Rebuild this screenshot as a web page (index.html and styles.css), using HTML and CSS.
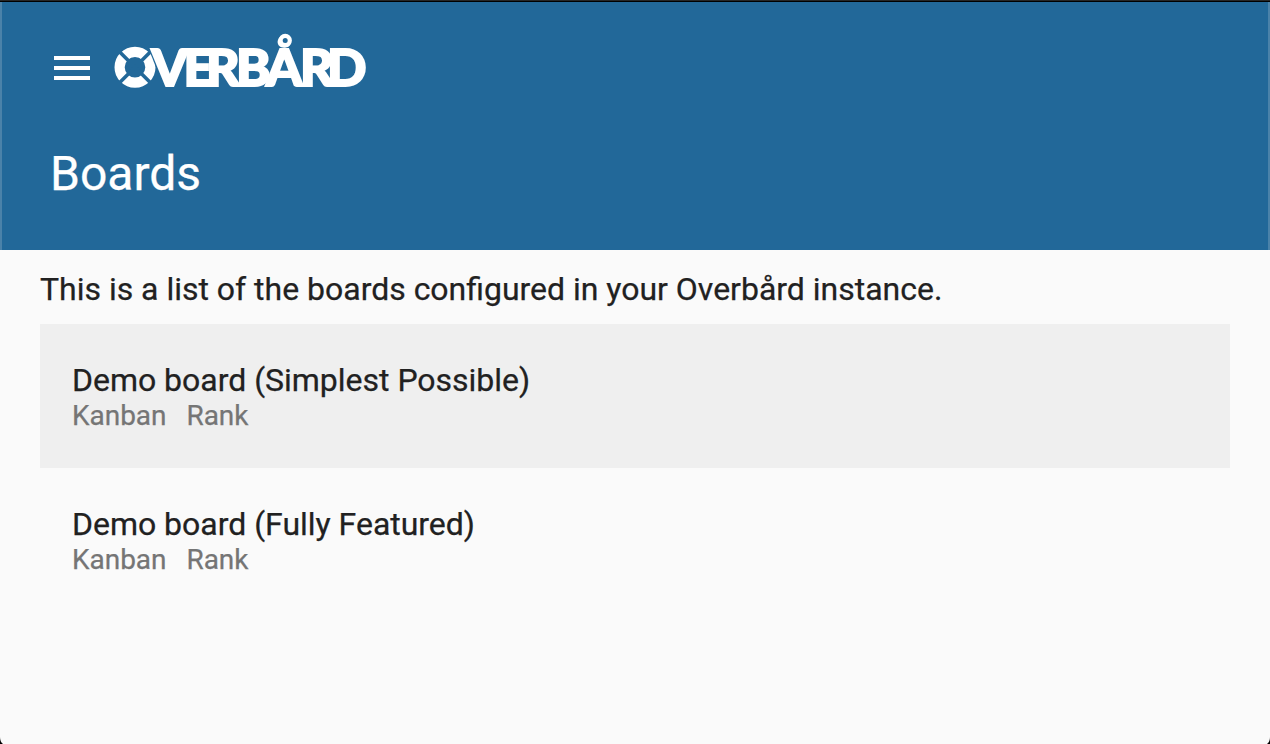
FILE: index.html
```html
<!DOCTYPE html>
<html lang="en">
<head>
<meta charset="utf-8">
<title>Overbård</title>
<link rel="stylesheet" href="styles.css">
</head>
<body>
<div class="edge"></div>
<header class="toolbar">
  <div class="brand">
    <svg class="menu" width="36" height="24" viewBox="0 0 36 24"><path d="M0 0h36v4H0zM0 10h36v4H0zM0 20h36v4H0z" fill="#fff"/></svg>
    <svg class="logo" width="260" height="60" viewBox="110 30 260 60">
      <circle cx="135" cy="67.2" r="15.4" fill="none" stroke="#fff" stroke-width="10.2"/>
      <path class="gap" d="M119 51.2L151 83.2M151 51.2L119 83.2"/>
      <path class="gap" d="M150 47L165.500 87"/>
      <text class="word" y="86" x="151.500 183.500 206 236 266 300 327">VERBÅRD</text>
      <circle class="ring" cx="285.200" cy="40.500" r="4.600"/>
    </svg>
  </div>
  <h1 class="title">Boards</h1>
</header>
<main class="content">
  <p class="intro">This is a list of the boards configured in your Overbård instance.</p>
  <section class="board active">
    <h2 class="name">Demo board (Simplest Possible)</h2>
    <div class="links"><span>Kanban</span><span>Rank</span></div>
  </section>
  <section class="board">
    <h2 class="name">Demo board (Fully Featured)</h2>
    <div class="links"><span>Kanban</span><span>Rank</span></div>
  </section>
</main>
<svg class="corner left" width="3" height="7" viewBox="0 0 3 7"><path d="M0 0Q0 5 3 7H0z"/></svg>
<svg class="corner right" width="3" height="7" viewBox="0 0 3 7"><path d="M3 0Q3 5 0 7H3z"/></svg>
</body>
</html>
```
FILE: styles.css
```css
* { box-sizing: border-box; }
body { margin: 0; height: 744px; overflow: hidden; background: #fafafa; color: #212121; font-family: Roboto, sans-serif; -webkit-text-stroke: .25px; }
.edge { height: 2px; background: #000; border-top: 1px solid #262626; }
.toolbar { height: 248px; padding-top: 28px; background: #226899; border-left: 2px solid #4b82a9; border-right: 2px solid #4b82a9; }
.brand { display: flex; align-items: center; height: 60px; padding-left: 52px; gap: 20px; }
.menu { margin-top: 16px; }
.logo { overflow: visible; }
.gap { stroke: #226899; stroke-width: 3.6; fill: none; }
.word { font: 900 52px Lato, sans-serif; fill: #fff; stroke: #fff; stroke-width: 2; }
.ring { fill: #226899; stroke: #fff; stroke-width: 4.2; }
.title { margin: 52px 0 0 48px; font-size: 48px; line-height: 64px; font-weight: 400; color: #fff; }
.content { padding: 16px 40px 0; }
.intro { margin: 0; height: 58px; font-size: 31.97px; line-height: 46px; }
.board { height: 144px; padding: 36px 32px 0; }
.active { background: #efefef; }
.name { margin: 0; font-size: 32px; line-height: 40px; font-weight: 400; letter-spacing: -.02px; }
.links { display: flex; gap: 20px; font-size: 28px; line-height: 32px; color: #757575; letter-spacing: -.04px; }
.corner { position: absolute; bottom: 0; fill: #000; }
.left { left: 0; }
.right { right: 0; }
```
